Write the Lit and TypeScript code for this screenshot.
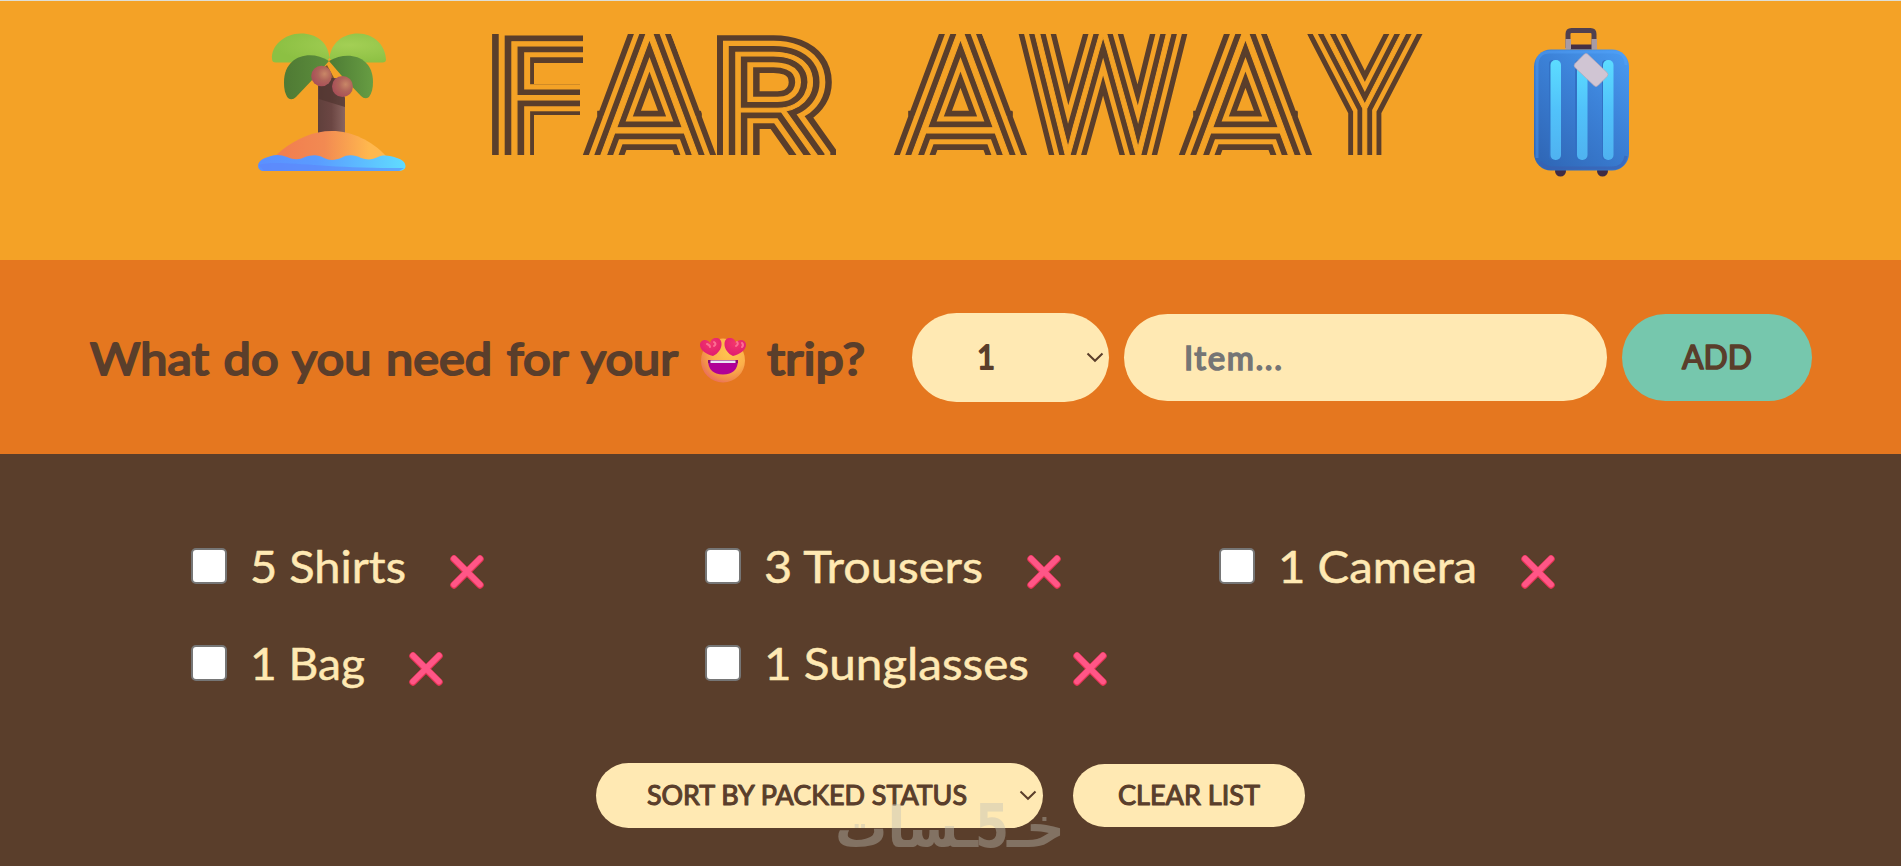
import { LitElement, html, svg, css } from "lit";
import { customElement, property } from "lit/decorators.js";

const BROWN = "#5a3e2b";
const AMBER = "#f4a226";

@customElement("fit-text")
class FitText extends LitElement {
  @property() label = "";
  @property({ type: Number }) width = 100;
  @property({ type: Number }) size = 44;
  @property({ type: Number }) weight = 0;
  @property({ type: Number }) gap = 0;
  static styles = css`
    :host { display: block; flex: none; }
    svg { display: block; overflow: visible; }
    text { font-family: Lato, "Open Sans", sans-serif; fill: currentColor; stroke: currentColor; stroke-linejoin: round; white-space: pre; }
  `;
  render() {
    const h = Math.round(this.size * 0.72);
    return html`<svg width=${this.width} height=${h}>
      <text x="0" y=${h} font-size=${this.size} stroke-width=${this.weight} word-spacing=${this.gap}
        textLength=${this.width} lengthAdjust="spacingAndGlyphs">${this.label}</text>
    </svg>`;
  }
}

interface Letter { ch: string; x: number; base: number; cap: number; w: number; clip: string; }

const LETTERS: Letter[] = [
  { ch: "F", x: 493.5, base: 157, cap: 115, w: 108, clip: "492,34 583,34 583,63 534,63 534,84 580,84 580,115 534,115 534,155 492,155" },
  { ch: "A", x: 590, base: 176, cap: 143, w: 119, clip: "580,155 627,34 671,34 718,155" },
  { ch: "R", x: 720, base: 157, cap: 104, w: 109, clip: "717,34 836,34 836,155 717,155" },
  { ch: "A", x: 901, base: 176, cap: 143, w: 119, clip: "891,155 938,34 982,34 1030,155" },
  { ch: "W", x: 1029, base: 155, cap: 125, w: 148, clip: "1018,34 1188,34 1162,155 1048,155" },
  { ch: "A", x: 1186, base: 176, cap: 143, w: 119, clip: "1176,155 1223,34 1267,34 1315,155" },
  { ch: "Y", x: 1319, base: 157, cap: 128, w: 92, clip: "1307,34 1424,34 1385,116 1385,155 1345,155 1345,116" },
];

@customElement("striped-title")
class StripedTitle extends LitElement {
  static styles = css`
    :host { display: block; }
    svg { display: block; }
    text { font-family: Roboto, sans-serif; font-weight: 100; }
    use { stroke-miterlimit: 12; }
  `;
  render() {
    return html`<svg width="932" height="121" viewBox="492 34 932 121" role="img" aria-label="FAR AWAY">
      ${LETTERS.map((l, i) => svg`
        <defs>
          <clipPath id="c${i}"><polygon points=${l.clip}/></clipPath>
          <text id="t${i}" x=${l.x} y=${l.base} font-size=${l.cap / 0.711} textLength=${l.w} lengthAdjust="spacingAndGlyphs">${l.ch}</text>
        </defs>
        <g clip-path="url(#c${i})">
          <use href="#t${i}" fill=${BROWN} stroke=${BROWN} stroke-width="34"/>
          <use href="#t${i}" fill=${AMBER} stroke=${AMBER} stroke-width="22.6"/>
          <use href="#t${i}" fill=${BROWN} stroke=${BROWN} stroke-width="12.4"/>
          <use href="#t${i}" fill=${AMBER} stroke=${AMBER} stroke-width="1"/>
        </g>`)}
    </svg>`;
  }
}

const palm = html`<svg class="palm" width="148" height="140" viewBox="258 32 148 140">
  <defs>
    <linearGradient id="trunk"><stop stop-color="#60403c"/><stop offset=".5" stop-color="#6b4643"/><stop offset="1" stop-color="#8a6560"/></linearGradient>
    <linearGradient id="sand"><stop offset=".1" stop-color="#f27f50"/><stop offset=".45" stop-color="#f28a52"/><stop offset=".85" stop-color="#ffb84e"/></linearGradient>
    <linearGradient id="sea"><stop stop-color="#5b90ff"/><stop offset=".4" stop-color="#5a9cff"/><stop offset="1" stop-color="#60dcff"/></linearGradient>
    <radialGradient id="leaf" cx=".68" cy=".4" r=".65"><stop stop-color="#a3cf55"/><stop offset="1" stop-color="#8cc043"/></radialGradient>
    <linearGradient id="dl"><stop stop-color="#4f7a34"/><stop offset="1" stop-color="#5c8e3c"/></linearGradient>
    <linearGradient id="dr"><stop stop-color="#4d7b34"/><stop offset="1" stop-color="#679d43"/></linearGradient>
    <radialGradient id="nut" cx=".65" cy=".4" r=".65"><stop stop-color="#c98767"/><stop offset=".5" stop-color="#b0645a"/><stop offset="1" stop-color="#a84f58"/></radialGradient>
  </defs>
  <path fill="url(#trunk)" d="M318 78h22l5 20v35h-27z"/>
  <path fill="#50352f" opacity=".7" d="M327 65l18 33v9l-26-8V72z"/>
  <path fill="url(#leaf)" d="M272 59c-1-13 12-25.500 29-25.500 16 0 27 9 28.500 24l-3 5H276q-4 0-4-3.500zM329.500 58C331 43 343 33.500 358 33.500c16 0 27.500 12 28 26q0 3-3.500 3H333z"/>
  <path fill="url(#dl)" d="M329 61c-19-12-45-5-45 21 0 7 1 12 4 16q4 3 8-1l19-20z"/>
  <path fill="url(#dr)" d="M329 61c19-11 44-5 44 21 0 6-1 11-4 15q-4 3-8-1L341 75z"/>
  <circle cx="321.500" cy="76" r="10.300" fill="url(#nut)"/><circle cx="342.500" cy="86.500" r="10.500" fill="url(#nut)"/>
  <path fill="url(#sand)" d="M274 157l8-7c14-11 31-19 50-19 20 0 40 10 54 25l-5 10H280z"/>
  <path fill="url(#sea)" d="M264 171c-8 0-8-10 1-13l6-2c5-2 11-1 16 1 7 3 12 3 18 0 6-2 13-3 19 1 6 3 12 2 17 0 7-4 14-3 20 0 6 2 11 2 17-1 6-3 13-1 19 1 11 3 11 13 2 13z"/>
  <path fill="#5e86fa" opacity=".6" d="M259 165c20-6 60 4 145 3l-5 3H264z"/>
</svg>`;

const suitcase = html`<svg class="case" width="97" height="150" viewBox="1533 27 97 150">
  <defs>
    <linearGradient id="body" x1="1" y1="0" x2=".2" y2="1"><stop stop-color="#4a9cf2"/><stop offset=".45" stop-color="#3c82d8"/><stop offset="1" stop-color="#3068b8"/></linearGradient>
    <linearGradient id="rib" x1="0" y1="0" x2="0" y2="1"><stop stop-color="#5cdcff"/><stop offset=".5" stop-color="#51c2fa"/><stop offset="1" stop-color="#4fb2f0"/></linearGradient>
  </defs>
  <path d="M1568 48V34q0-3.500 3.500-3.500h19q3.500 0 3.500 3.500v14" fill="none" stroke="#50404f" stroke-width="5"/>
  <path d="M1570 44.500h22v5h-22z" fill="#453044"/>
  <path d="M1565.500 39h5.500V49.500h-5.500zM1591.500 39h5.500V49.500h-5.500z" fill="#a89ba4"/>
  <circle cx="1560.500" cy="171" r="5.500" fill="#402c44"/><circle cx="1602.500" cy="171" r="5.500" fill="#402c44"/>
  <rect x="1534" y="49.500" width="95" height="121" rx="17" fill="url(#body)"/>
  <path d="M1537 158V65q0-13 13-13h63q13 0 13 13" fill="none" stroke="#58a8ff" opacity=".35" stroke-width="3"/>
  <path d="M1540 162q5 6 12 6h60q12 0 14-12" fill="none" stroke="#3b5cae" opacity=".5" stroke-width="3"/>
  <g fill="#3270c4"><rect x="1549" y="60" width="8" height="100" rx="4"/><rect x="1575" y="60" width="8" height="100" rx="4"/><rect x="1602" y="60" width="8" height="100" rx="4"/></g>
  <g fill="url(#rib)"><rect x="1550.500" y="60" width="10.500" height="100" rx="5"/><rect x="1577" y="60" width="10.500" height="100" rx="5"/><rect x="1603" y="60" width="10.500" height="100" rx="5"/></g>
  <path d="M1587.500 54l19.500 18.500q2 2 0 4l-9 9q-2 2-4 0l-19-18q-1.500-2 0-4l9.500-9.500q1.500-1 3 0z" fill="#d0c5d3" stroke="#b9a6b5" stroke-width=".7"/>
</svg>`;

const heartEyes = html`<svg class="face" width="46" height="46" viewBox="0 0 46 46">
  <defs>
    <radialGradient id="skin" cx=".65" cy=".3" r=".8"><stop stop-color="#ffc650"/><stop offset=".5" stop-color="#fcb04a"/><stop offset=".8" stop-color="#f08a4a"/><stop offset="1" stop-color="#e96068"/></radialGradient>
    <radialGradient id="heart" cx=".5" cy=".3" r=".7"><stop stop-color="#f3366c"/><stop offset="1" stop-color="#e01c70"/></radialGradient>
  </defs>
  <circle cx="23" cy="22.500" r="22" fill="url(#skin)"/>
  <path fill="url(#heart)" d="M13 18C6 16 0 12 0 7c0-5 7-7 10-2 1-6 9-7 11-2 2 6-2 12-8 15z"/>
  <path fill="url(#heart)" d="M33 18c7-2 13-6 13-11 0-5-7-7-10-2-1-6-9-7-11-2-2 6 2 12 8 15z"/>
  <path d="M14 4q3 2 0 4M37 4q2 2-1 4M7 6q3 1 3 3M42 5q2 2 0 4" stroke="#fb6f93" stroke-width="2" fill="none" stroke-linecap="round"/>
  <path fill="#b00097" d="M8 22h30q0 14-15 14.500Q8 36 8 22z"/>
  <path fill="#8d0b72" d="M8 22h30v3H8z"/><path fill="#e9e6f4" d="M10.500 22.500h25v2.500h-25z"/>
</svg>`;

const cross = html`<svg class="cross" width="34" height="34" viewBox="0 0 34 34">
  <path d="M4 4l26 26M30 4l-26 26" stroke="#ea3558" stroke-width="7.400" stroke-linecap="round"/>
  <path d="M4 3.500l26 26M30 3.500l-26 26" stroke="#ff5687" stroke-width="5.600" stroke-linecap="round"/>
</svg>`;

const chevron = html`<svg class="chev" width="18" height="11" viewBox="0 0 18 11">
  <path d="M1.500 1.500L9 8.800l7.500-7.300" fill="none" stroke="#5a3e2b" stroke-width="2"/></svg>`;

const ITEMS = [
  { label: "5 Shirts", w: 156 },
  { label: "3 Trousers", w: 219 },
  { label: "1 Camera", w: 199 },
  { label: "1 Bag", w: 115 },
  { label: "1 Sunglasses", w: 265 },
];

@customElement("app-root")
class AppRoot extends LitElement {
  static styles = css`
    :host { display: flex; flex-direction: column; position: relative; width: 100%; height: 866px; overflow: hidden; color: #5a3e2b; background: #5a3e2b; font-family: Lato, sans-serif; }
    * { box-sizing: border-box; }
    svg { display: block; flex: none; }
    header { height: 260px; flex: none; background: #f4a226; border-top: 1px solid #dedfd6; display: flex; align-items: flex-start; padding-left: 258px; }
    .palm { margin-top: 31px; }
    striped-title { margin: 33px 109px 0 86px; flex: none; }
    .case { margin-top: 26px; }
    .form { height: 194px; flex: none; background: #e5771f; display: flex; align-items: center; padding: 4px 0 0 90px; }
    .ask { display: flex; align-items: center; width: 822px; }
    .face { margin: 3px 21px 0 22px; }
    .pill { background: #ffe9b3; border: 0; flex: none; display: flex; align-items: center; border-radius: 45px; color: #5a3e2b; margin: 0; }
    .qty { width: 197px; height: 89px; padding: 0 5px 0 65px; justify-content: space-between; margin-top: -4px; }
    .item-in { width: 483px; height: 87px; margin: -4px 15px 0; padding: 0 60px; font: 33px Lato, sans-serif; outline: 0; }
    .item-in::placeholder { color: #757575; opacity: 1; letter-spacing: 1.600px; -webkit-text-stroke: 1.6px #757575; }
    .add { width: 190px; height: 87px; margin-top: -4px; background: #76c7ad; justify-content: center; padding: 0; }
    .list { list-style: none; margin: 0; padding: 63px 0 0 189px; height: 309px; flex: none; display: grid; grid-template-columns: repeat(3, 514px); grid-auto-rows: 97px; color: #ffe9b3; }
    .item { display: flex; align-items: center; }
    .box { width: 36px; height: 36px; background: #fff; border: 2px solid #767676; border-radius: 5px; flex: none; margin: 0 23px 0 2px; }
    .item fit-text { margin: 2px 44px 0 0; }
    .cross { margin-top: 13px; }
    .actions { display: flex; align-items: center; padding-left: 596px; gap: 30px; height: 65px; flex: none; }
    .sort { width: 447px; height: 65px; padding: 0 6px 0 51px; justify-content: space-between; }
    .clear { width: 232px; height: 63px; justify-content: center; padding: 0; }
    .mark { position: absolute; left: 834px; top: 790px; opacity: .4; }
    .mark text { font-family: "DejaVu Sans", sans-serif; font-weight: 700; fill: #bfc0b7; direction: rtl; }
  `;
  render() {
    return html`
      <header>${palm}<striped-title></striped-title>${suitcase}</header>
      <section class="form">
        <div class="ask">
          <fit-text label="What do you need for your" width="588" size="43.500" weight="2" gap="2"></fit-text>
          ${heartEyes}
          <fit-text label="trip?" width="98" size="43.500" weight="2"></fit-text>
        </div>
        <div class="pill qty"><fit-text label="1" width="18" size="33" weight="1.8"></fit-text>${chevron}</div>
        <input class="pill item-in" placeholder="Item..." />
        <button class="pill add"><fit-text label="ADD" width="70" size="33" weight="1.6"></fit-text></button>
      </section>
      <ul class="list">
        ${ITEMS.map((i) => html`<li class="item"><span class="box"></span>
          <fit-text label=${i.label} width=${i.w} size="44" weight="0.5"></fit-text>${cross}</li>`)}
      </ul>
      <div class="actions">
        <div class="pill sort"><fit-text label="SORT BY PACKED STATUS" width="320" size="26" weight="1.1"></fit-text>${chevron}</div>
        <button class="pill clear"><fit-text label="CLEAR LIST" width="142" size="26" weight="1.1"></fit-text></button>
      </div>
      <svg class="mark" width="232" height="76" viewBox="0 0 232 76">
        <text x="231" y="57" font-size="56" textLength="58" lengthAdjust="spacingAndGlyphs">خـ</text>
        <text x="175" y="57" font-size="61" textLength="34" lengthAdjust="spacingAndGlyphs">5</text>
        <text x="144" y="57" font-size="56" textLength="143" lengthAdjust="spacingAndGlyphs">ـسات</text>
      </svg>`;
  }
}
